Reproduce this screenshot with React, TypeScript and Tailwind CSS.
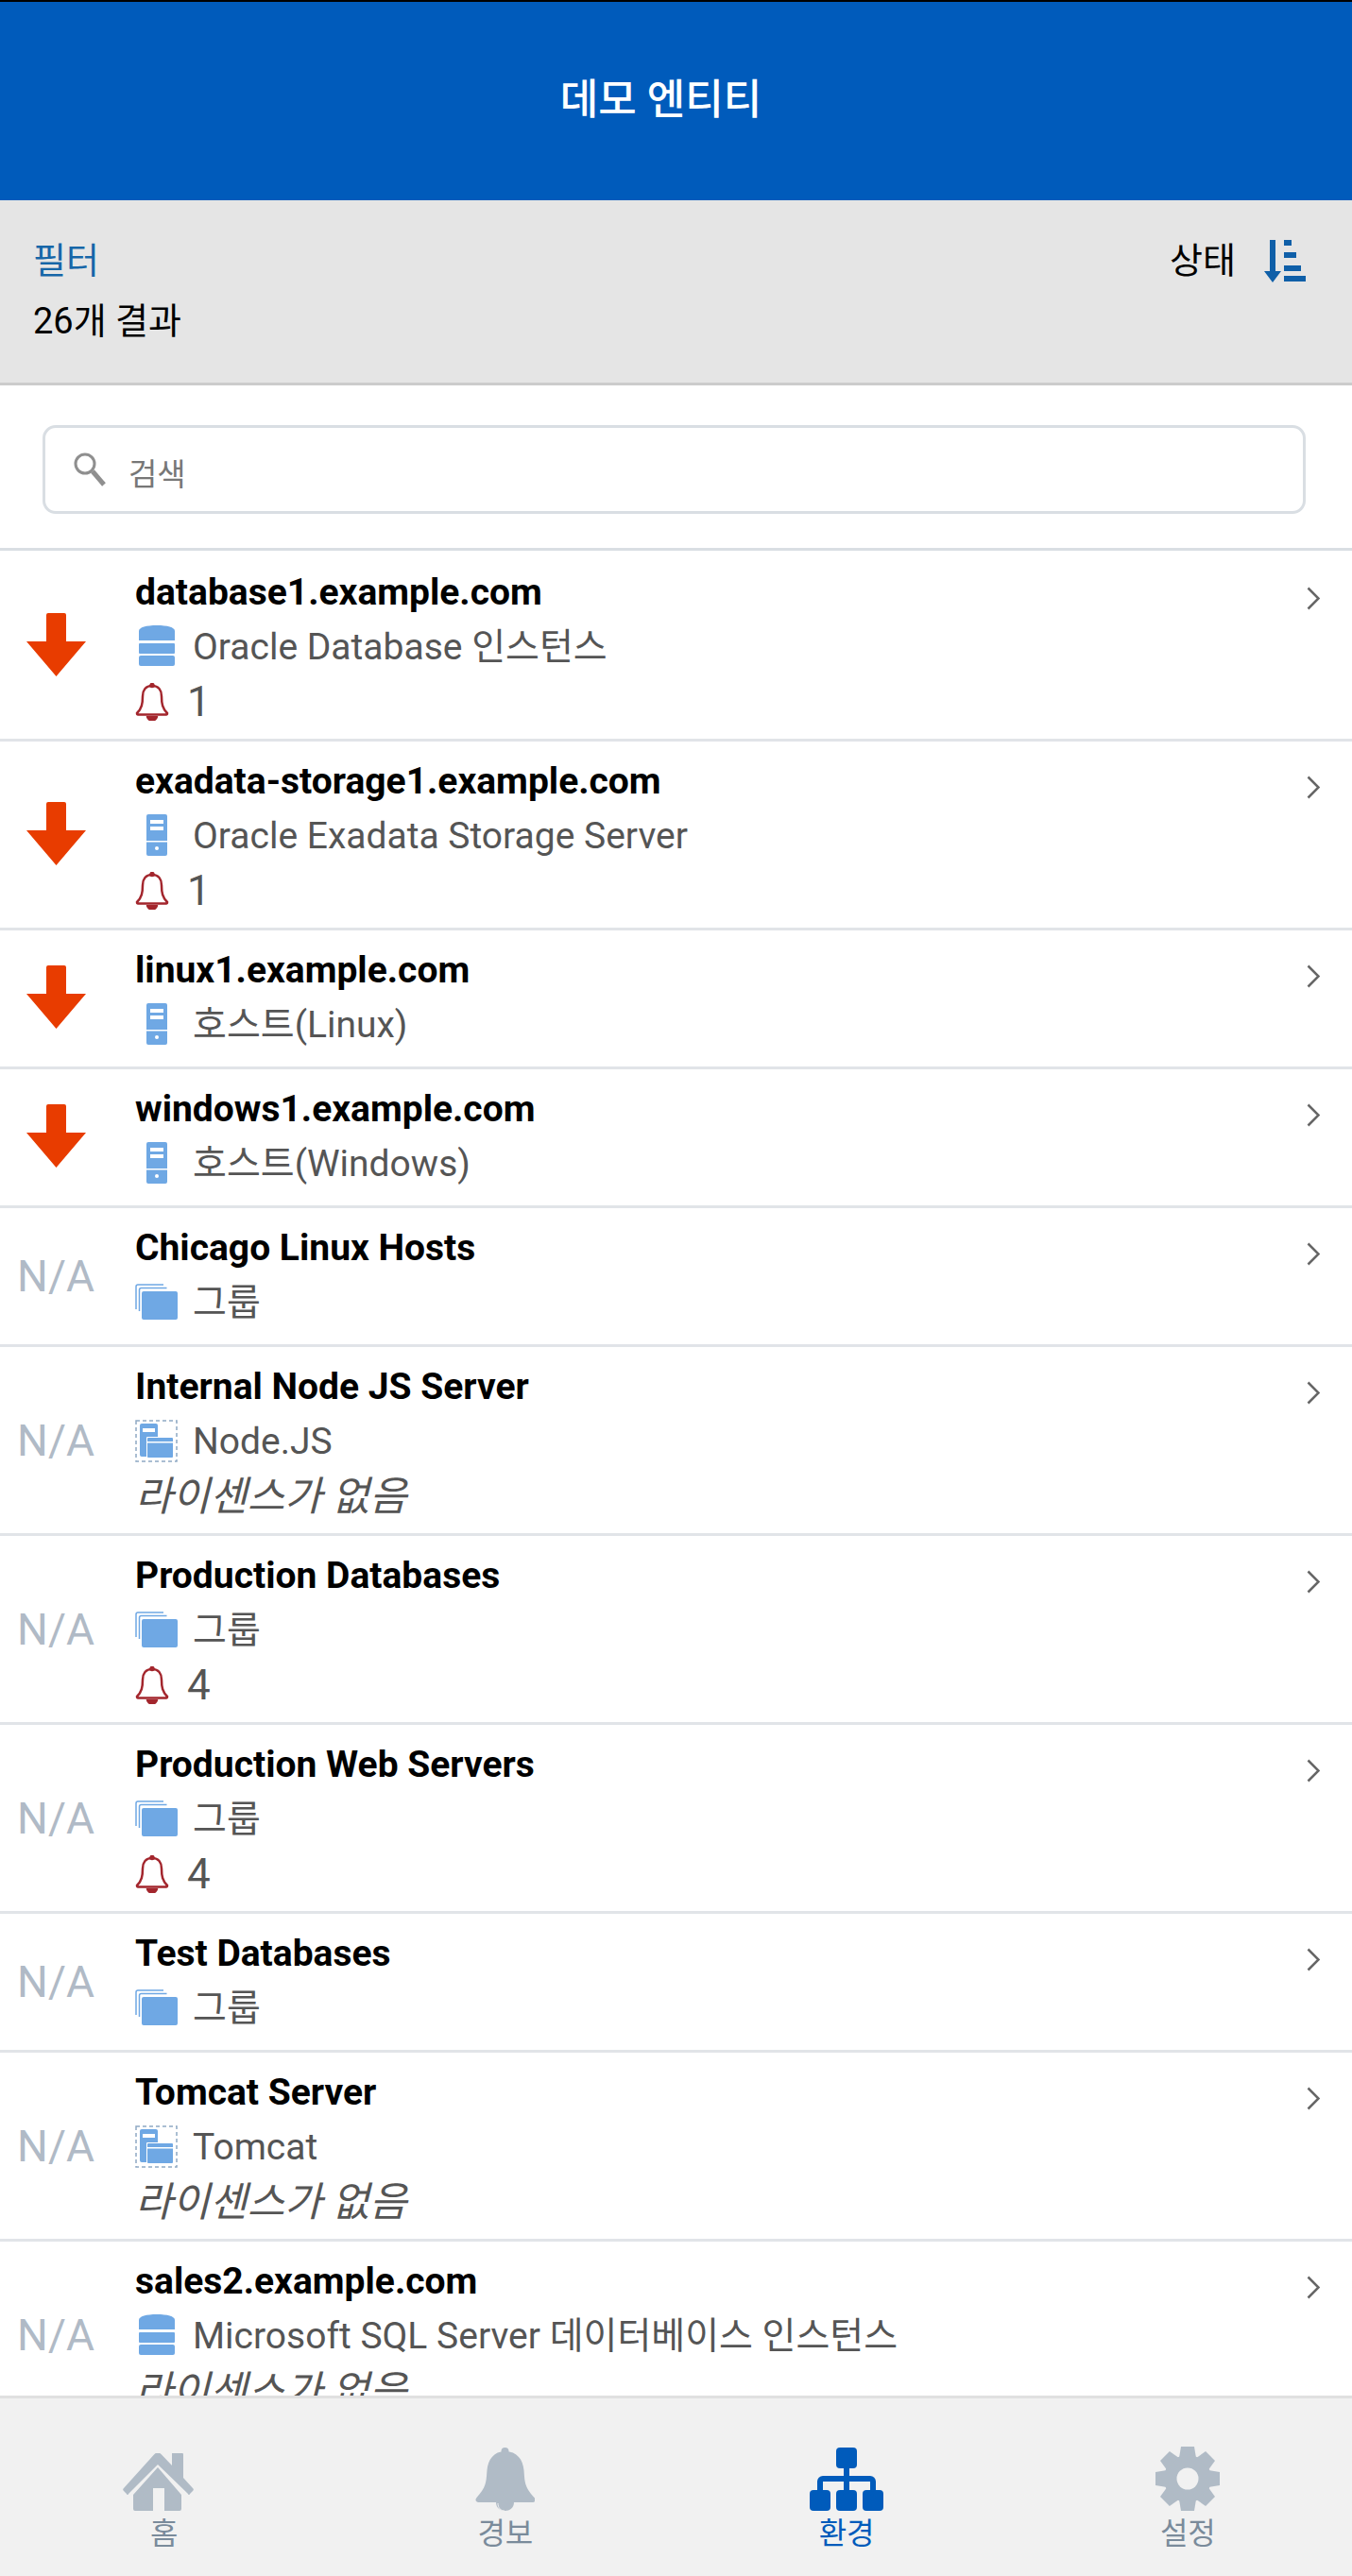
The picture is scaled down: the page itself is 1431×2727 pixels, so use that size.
import React from 'react';

type Kind = 'db' | 'server' | 'group' | 'app';

type Entity = {
    name: string;
    kind: Kind;
    type: string;
    down?: boolean;
    alerts?: number;
    unlicensed?: boolean;
};

const entities: Entity[] = [
    { name: 'database1.example.com', kind: 'db', type: 'Oracle Database 인스턴스', down: true, alerts: 1 },
    { name: 'exadata-storage1.example.com', kind: 'server', type: 'Oracle Exadata Storage Server', down: true, alerts: 1 },
    { name: 'linux1.example.com', kind: 'server', type: '호스트(Linux)', down: true },
    { name: 'windows1.example.com', kind: 'server', type: '호스트(Windows)', down: true },
    { name: 'Chicago Linux Hosts', kind: 'group', type: '그룹' },
    { name: 'Internal Node JS Server', kind: 'app', type: 'Node.JS', unlicensed: true },
    { name: 'Production Databases', kind: 'group', type: '그룹', alerts: 4 },
    { name: 'Production Web Servers', kind: 'group', type: '그룹', alerts: 4 },
    { name: 'Test Databases', kind: 'group', type: '그룹' },
    { name: 'Tomcat Server', kind: 'app', type: 'Tomcat', unlicensed: true },
    { name: 'sales2.example.com', kind: 'db', type: 'Microsoft SQL Server 데이터베이스 인스턴스', unlicensed: true },
];

function DownArrow() {
    return (
        <svg className="mb-[3px]" width="63" height="67" viewBox="0 0 63 67">
            <path d="M23 0h17a2 2 0 0 1 2 2v28h21L31.500 67 0 30h21V2a2 2 0 0 1 2-2z" fill="#e83c00" />
        </svg>
    );
}

function KindIcon({ kind }: { kind: Kind }) {
    if (kind === 'db') {
        return (
            <svg width="38" height="44" viewBox="0 0 38 44" fill="#6fa8e4">
                <path d="M0 6C0 2 8 0 19 0s19 2 19 6v10H0z" />
                <rect x="0" y="19" width="38" height="11" rx="1" />
                <rect x="0" y="32" width="38" height="11" rx="2" />
            </svg>
        );
    }
    if (kind === 'server') {
        return (
            <svg width="22" height="44" viewBox="0 0 22 44">
                <rect width="22" height="44" rx="2" fill="#6fa8e4" />
                <rect x="4" y="6" width="14" height="4" fill="#fff" />
                <rect x="4" y="13" width="14" height="4" fill="#fff" />
                <rect x="0" y="28" width="22" height="1.500" fill="#fff" />
                <circle cx="11" cy="36" r="2" fill="#fff" />
            </svg>
        );
    }
    if (kind === 'group') {
        return (
            <svg width="45" height="38" viewBox="0 0 45 38" fill="none">
                <path d="M1 27V3a2 2 0 0 1 2-2h27" stroke="#6fa8e4" strokeWidth="1.500" />
                <path d="M4.500 29V6.500a2 2 0 0 1 2-2h27" stroke="#6fa8e4" strokeWidth="1.500" />
                <rect x="7" y="8" width="38" height="30" rx="2" fill="#6fa8e4" />
            </svg>
        );
    }
    return (
        <svg width="45" height="45" viewBox="0 0 45 45" fill="none">
            <rect x="1" y="1" width="43" height="43" stroke="#8fa9c4" strokeWidth="1.500" strokeDasharray="4 3" />
            <path d="M5 6a2 2 0 0 1 2-2h15a2 2 0 0 1 2 2v12h-7v21H7a2 2 0 0 1-2-2z" fill="#6fa8e4" />
            <rect x="8" y="9" width="13" height="4" fill="#fff" />
            <rect x="12" y="18" width="29" height="23" rx="1" fill="#fff" />
            <rect x="13" y="19" width="27" height="21" rx="1" fill="#6fa8e4" />
            <rect x="13" y="23" width="27" height="1.500" fill="#fff" />
        </svg>
    );
}

function AlertBell() {
    return (
        <svg width="36" height="40" viewBox="0 0 36 40" fill="none" stroke="#a3262d" strokeWidth="2.500">
            <path d="M18 3c-7 0-10 5-10 11 0 8-1 13-6 18 0 1 0 1.500 1 1.500h30c1 0 1-.5 1-1.500-5-5-6-10-6-18 0-6-3-11-10-11z" />
            <path d="M13 35c0 6 10 6 10 0" fill="#a3262d" />
            <circle cx="18" cy="2.500" r="1.500" fill="#a3262d" />
        </svg>
    );
}

function Row({ item }: { item: Entity }) {
    return (
        <div className="flex border-b-[3px] border-[#e1e4e8] pt-[15px] first:pt-[17px] pb-[15px] shrink-0">
            <div className="w-[118px] shrink-0 flex items-center justify-center">
                {item.down ? <DownArrow /> : <span className="text-[46px] leading-none text-[#b0bac6]">N/A</span>}
            </div>
            <div className="ml-[25px] flex-1 min-w-0">
                <div className="h-[54px] flex items-center text-[39px] font-bold text-black whitespace-nowrap">{item.name}</div>
                <div className="h-[60px] flex items-center text-[39px] text-[#555]">
                    <span className="w-[61px] shrink-0 flex justify-center pr-[16px]">
                        <KindIcon kind={item.kind} />
                    </span>
                    <span className="whitespace-nowrap pt-[2px]">{item.type}</span>
                </div>
                {item.alerts !== undefined && (
                    <div className="h-[53px] flex items-center pt-[5px] text-[44px] text-[#555]">
                        <AlertBell />
                        <span className="ml-[19px]">{item.alerts}</span>
                    </div>
                )}
                {item.unlicensed && (
                    <div className="h-[53px] flex items-center pt-[5px] text-[43px] italic text-[#555] whitespace-nowrap">라이센스가 없음</div>
                )}
            </div>
            <div className="w-[48px] shrink-0 pt-[21px]">
                <svg width="14" height="25" viewBox="0 0 14 25" fill="none" stroke="#666" strokeWidth="2.500">
                    <path d="M1.500 1.500l11 11-11 11" />
                </svg>
            </div>
        </div>
    );
}

function HomeIcon() {
    return (
        <svg width="75" height="61" viewBox="0 0 75 61" fill="#b0bbc6">
            <path d="M37 15L62 44v15a2 2 0 0 1-2 2H44V37H32v24H13a2 2 0 0 1-2-2V44z" />
            <path d="M33 1.500a5 5 0 0 1 8 0L52 13V0h11a1 1 0 0 1 1 1v25l10 11a2 2 0 0 1 0 3l-3 3a1 1 0 0 1-2 0L37 12 6 43a1 1 0 0 1-2 0l-3-3a2 2 0 0 1 0-3z" />
        </svg>
    );
}

function BellIcon() {
    return (
        <svg width="63" height="68" viewBox="0 0 63 68" fill="#b0bbc6">
            <circle cx="31.500" cy="5" r="4" />
            <path d="M31.500 5c-12 0-18 9-19 20-1 11 0 17-11 29-2 2-1 5 2 5h57c3 0 4-3 2-5-11-12-10-18-11-29-1-11-7-20-20-20z" />
            <path d="M22 59h19c0 12-19 12-19 0z" />
            <path d="M24 60c0 5 3 8 7 8" fill="none" stroke="#f1f1f1" strokeWidth="1" />
        </svg>
    );
}

function NetworkIcon() {
    return (
        <svg width="78" height="67" viewBox="0 0 78 67" fill="#005bbb">
            <rect x="28" y="0" width="22" height="22" rx="4" />
            <rect x="0" y="45" width="22" height="22" rx="4" />
            <rect x="28" y="45" width="22" height="22" rx="4" />
            <rect x="56" y="45" width="22" height="22" rx="4" />
            <rect x="36" y="20" width="6" height="28" />
            <path d="M8 48V36a6 6 0 0 1 6-6h50a6 6 0 0 1 6 6v12h-6V36H14v12z" />
        </svg>
    );
}

function GearIcon() {
    return (
        <svg width="68" height="68" viewBox="0 0 68 68" fill="#b0bbc6">
            <circle cx="34" cy="34" r="25" />
            <path d="M27 0h14l2 12H25z" />
            <path d="M27 68h14l2-12H25z" />
            <path d="M0 27v14l12 2V25z" />
            <path d="M68 27v14l-12 2V25z" />
            <path d="M27 0h14l2 12H25z" transform="rotate(45 34 34)" />
            <path d="M27 0h14l2 12H25z" transform="rotate(135 34 34)" />
            <path d="M27 0h14l2 12H25z" transform="rotate(225 34 34)" />
            <path d="M27 0h14l2 12H25z" transform="rotate(315 34 34)" />
            <circle cx="34" cy="34" r="11.500" fill="#f1f1f1" />
        </svg>
    );
}

export default function App() {
    return (
        <div className="h-[2727px] w-[1431px] flex flex-col overflow-hidden bg-white font-['Roboto','Noto_Sans_CJK_KR',sans-serif]">
            <header className="h-[212px] shrink-0 border-t-2 border-black bg-[#005bbb] flex items-center justify-center pb-[3px] pr-[32px]">
                <h1 className="text-[44px] font-medium text-white">데모 엔티티</h1>
            </header>

            <div className="h-[196px] shrink-0 border-b-[3px] border-[#cccccc] bg-[#e5e5e5] flex justify-between pl-[35px] pr-[49px] pt-[39px]">
                <div>
                    <div className="h-[50px] flex items-center text-[38px] text-[#1666a8]">필터</div>
                    <div className="h-[66px] pt-[12px] flex items-center text-[38px] text-black">26개 결과</div>
                </div>
                <div className="flex h-[50px] items-center">
                    <span className="text-[38px] text-black">상태</span>
                    <svg className="ml-[30px]" width="44" height="45" viewBox="0 0 44 45" fill="#0f5fa8">
                        <path d="M6 0h6v33h6l-9 12-9-12h6z" />
                        <rect x="21" y="0" width="8" height="6" />
                        <rect x="21" y="13" width="13" height="6" />
                        <rect x="21" y="27" width="18" height="6" />
                        <rect x="21" y="38" width="23" height="6" />
                    </svg>
                </div>
            </div>

            <div className="h-[175px] shrink-0 border-b-[3px] border-[#d9dee3] pl-[45px] pr-[49px] pt-[42px]">
                <div className="h-[94px] rounded-[14px] border-[3px] border-[#d9dee3] flex items-center pl-[30px]">
                    <svg width="34" height="36" viewBox="0 0 34 36" fill="none" stroke="#8f8f8f">
                        <circle cx="12" cy="12" r="10" strokeWidth="3" />
                        <path d="M20 20l12 14" strokeWidth="5" />
                    </svg>
                    <span className="ml-[24px] mt-[12px] text-[33px] text-[#777]">검색</span>
                </div>
            </div>

            <main className="flex-1 min-h-0 overflow-hidden flex flex-col">
                {entities.map((item) => (
                    <Row key={item.name} item={item} />
                ))}
            </main>

            <nav className="h-[191px] shrink-0 -mx-[7px] border-t-[3px] border-[#e0e0e0] bg-[#f1f1f1] grid grid-cols-4 pt-[51px] text-[#7a8b9b]">
                <div className="flex flex-col items-center">
                    <div className="h-[68px] flex items-end -translate-x-[6px]"><HomeIcon /></div>
                    <span className="mt-[6px] text-[32px] leading-[36px]">홈</span>
                </div>
                <div className="flex flex-col items-center">
                    <div className="h-[68px] flex items-end"><BellIcon /></div>
                    <span className="mt-[6px] text-[32px] leading-[36px]">경보</span>
                </div>
                <div className="flex flex-col items-center text-[#005bbb]">
                    <div className="h-[68px] flex items-end"><NetworkIcon /></div>
                    <span className="mt-[6px] text-[32px] leading-[36px]">환경</span>
                </div>
                <div className="flex flex-col items-center">
                    <div className="h-[68px] flex items-end"><GearIcon /></div>
                    <span className="mt-[6px] text-[32px] leading-[36px]">설정</span>
                </div>
            </nav>
        </div>
    );
}
